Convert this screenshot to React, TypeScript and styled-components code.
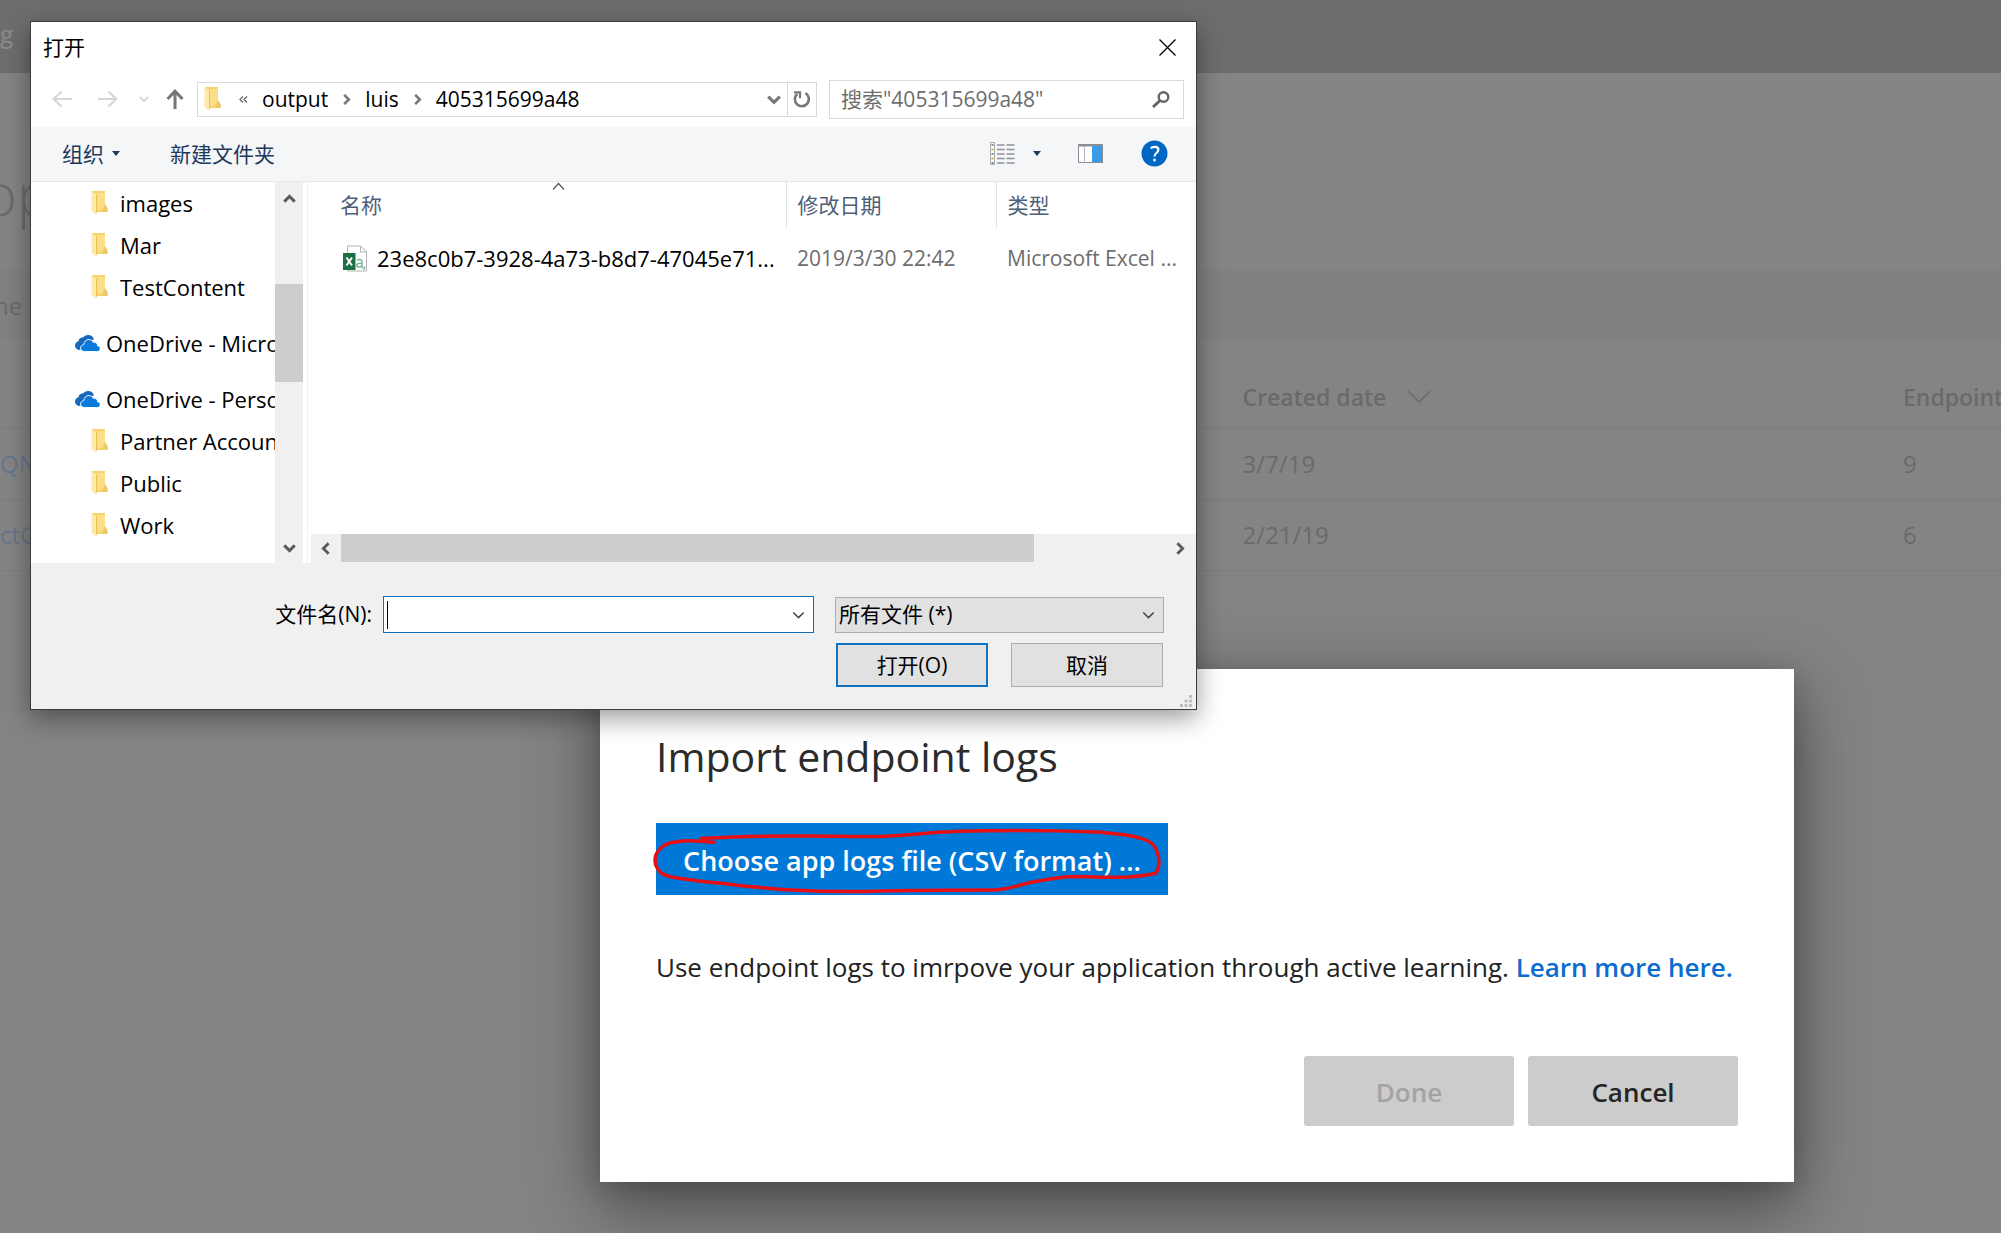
import React from "react";
import styled, { createGlobalStyle } from "styled-components";

const GlobalStyle = createGlobalStyle`
  *, *::before, *::after { box-sizing: border-box; }
  body {
    margin: 0;
    overflow: hidden;
    background: #848484;
    font-family: "Open Sans", "Noto Sans", "Noto Sans CJK SC", sans-serif;
  }
  button, input, select { font: inherit; color: inherit; }
  button { border: 0; padding: 0; background: none; }
`;

/* ---------- dimmed portal page ---------- */

const Page = styled.div`
  position: relative;
  min-height: 100vh;
  overflow: hidden;
  background: #848484;
  color: #6a6a6a;
  font-size: 24px;
`;

const TopBar = styled.header`
  display: flex;
  align-items: center;
  height: 73px;
  padding-bottom: 6px;
  background: #6d6d6d;
  color: #888;
  font-weight: 600;
`;

const PageTitle = styled.h1`
  display: flex;
  align-items: center;
  height: 197px;
  margin: 0 0 0 -17px;
  padding-top: 44px;
  font-size: 58px;
  font-weight: 300;
`;

const FilterBar = styled.div`
  display: flex;
  align-items: center;
  height: 70px;
  margin-left: -6px;
  background: #818181;
`;

const AppTable = styled.table`
  width: 100%;
  table-layout: fixed;
  border-collapse: collapse;
  text-align: left;

  th, td {
    height: 71px;
    padding: 0 0 0 2px;
    border-bottom: 1px solid #7d7d7d;
    font-weight: 400;
    white-space: nowrap;
  }
  th {
    height: 88px;
    padding-top: 26px;
    font-size: 23px;
    font-weight: 600;
  }
  td:first-child { padding-left: 0; }
  th:first-child { width: 62%; }
  th:nth-child(2) { width: 33%; }
`;

const AppLink = styled.a`
  color: #66758a;
  text-decoration: none;
`;

const SortButton = styled.button`
  display: flex;
  align-items: center;
  gap: 21px;
`;

/* ---------- import modal ---------- */

const Modal = styled.section`
  position: absolute;
  left: 600px;
  top: 669px;
  width: 1194px;
  padding: 61px 56px 56px;
  background: #fff;
  color: #222;
  box-shadow: 0 24px 64px 4px rgba(0, 0, 0, 0.42), 0 4px 20px rgba(0, 0, 0, 0.14);
`;

const ModalTitle = styled.h2`
  margin: 0 0 41px;
  font-size: 41px;
  line-height: 52px;
  font-weight: 400;
  color: #2b2b2b;
`;

const ChooseWrap = styled.div`
  position: relative;
  width: 512px;
`;

const ChooseButton = styled.button`
  width: 100%;
  height: 72px;
  padding-top: 2px;
  background: #0078d7;
  color: #fff;
  font-size: 27px;
  font-weight: 600;
  white-space: nowrap;
`;

const Scribble = styled.svg`
  position: absolute;
  left: -8px;
  top: 0;
  width: 528px;
  height: 72px;
  pointer-events: none;
`;

const Hint = styled.p`
  margin: 54px 0 0;
  font-size: 26px;
  line-height: 36px;
  white-space: nowrap;

  a { color: #0a6cce; font-weight: 600; text-decoration: none; }
`;

const ModalActions = styled.div`
  display: flex;
  justify-content: flex-end;
  gap: 14px;
  margin-top: 71px;
`;

const ModalButton = styled.button`
  width: 210px;
  height: 70px;
  padding-top: 2px;
  border-radius: 3px;
  background: #ccc;
  color: #252525;
  font-size: 26px;
  font-weight: 600;
  &:disabled { color: #a3a3a3; }
`;

/* ---------- file dialog ---------- */

const Dialog = styled.section`
  position: absolute;
  left: 30px;
  top: 21px;
  width: 1167px;
  border: 1px solid #3c3c3c;
  background: #fff;
  color: #000;
  font-size: 21px;
  line-height: 28px;
  box-shadow: 0 8px 24px rgba(0, 0, 0, 0.4);
`;

const TitleBar = styled.div`
  display: flex;
  align-items: center;
  justify-content: space-between;
  height: 50px;
  padding: 0 20px 0 12px;
`;

const IconButton = styled.button`
  display: flex;
  align-items: center;
  justify-content: center;
  flex: none;
`;

const NavRow = styled.div`
  display: flex;
  align-items: center;
  height: 55px;
  padding: 0 12px 1px 16px;
`;

const Arrows = styled.div`
  display: flex;
  align-items: center;
  gap: 17px;
  width: 150px;
`;

const HistoryButton = styled(IconButton)`
  width: 29px;
`;

const AddressBar = styled.div`
  display: flex;
  align-items: center;
  flex: 1;
  height: 35px;
  border: 1px solid #d9d9d9;
  padding-left: 6px;
`;

const Crumbs = styled.nav`
  display: flex;
  align-items: center;
  flex: 1;
  gap: 14px;
  margin-left: 18px;
`;

const Refresh = styled(IconButton)`
  width: 29px;
  height: 100%;
  margin-left: 6px;
  border-left: 1px solid #d9d9d9;
`;

const SearchBox = styled.label`
  display: flex;
  align-items: center;
  width: 355px;
  height: 39px;
  margin-left: 12px;
  padding: 0 13px 0 11px;
  border: 1px solid #d9d9d9;

  input {
    flex: 1;
    min-width: 0;
    border: 0;
    padding: 0;
    outline: 0;
    background: none;
  }
  input::placeholder { color: #6d6d6d; opacity: 1; }
`;

const Toolbar = styled.div`
  display: flex;
  align-items: center;
  height: 55px;
  padding: 0 28px 1px 31px;
  border-bottom: 1px solid #e6e7e8;
  background: #f4f6f8;
  color: #1e395b;
`;

const ToolButton = styled.button<{ $end?: number }>`
  display: flex;
  align-items: center;
  gap: 8px;
  margin-right: ${(p) => p.$end ?? 0}px;
`;

const Spacer = styled.div`
  flex: 1;
`;

const Body = styled.div`
  display: flex;
  height: 381px;
`;

const Tree = styled.div`
  flex: none;
  width: 244px;
  overflow: hidden;
  font-size: 22px;
`;

const TreeItem = styled.button<{ $root?: boolean }>`
  display: flex;
  align-items: center;
  gap: ${(p) => (p.$root ? 6 : 12)}px;
  width: 100%;
  height: 42px;
  margin-top: ${(p) => (p.$root ? 14 : 0)}px;
  padding-left: ${(p) => (p.$root ? 44 : 60)}px;
  white-space: nowrap;
  svg { flex: none; }
`;

const ScrollTrack = styled.div<{ $horizontal?: boolean }>`
  display: flex;
  flex: none;
  flex-direction: ${(p) => (p.$horizontal ? "row" : "column")};
  ${(p) => (p.$horizontal ? "height: 29px; padding-bottom: 1px;" : "width: 28px;")}
  background: #f0f0f0;
`;

const ScrollPart = styled.div<{ $grow: number; $thumb?: boolean }>`
  flex: ${(p) => p.$grow} 1 0;
  background: ${(p) => (p.$thumb ? "#cdcdcd" : "transparent")};
`;

const ScrollArrow = styled(IconButton)<{ $length: number }>`
  flex: 0 0 ${(p) => p.$length}px;
`;

const ListPane = styled.div`
  display: flex;
  flex: 1;
  flex-direction: column;
  min-width: 0;
  margin-left: 4px;
  padding-left: 3px;
  border-left: 1px solid #f0f0f0;
`;

const FileTable = styled.table`
  width: 100%;
  table-layout: fixed;
  border-collapse: collapse;
  text-align: left;

  th {
    position: relative;
    height: 46px;
    padding: 0 0 0 11px;
    color: #4c607a;
    font-weight: 400;
  }
  th + th { border-left: 1px solid #e2e2e6; }
  th:first-child { width: 475px; padding-left: 29px; }
  th:nth-child(2) { width: 210px; }
  td {
    height: 60px;
    padding: 0 0 0 11px;
    color: #6d6d6d;
    white-space: nowrap;
  }
  td:first-child { padding-left: 32px; color: #000; font-size: 22px; }
`;

const SortMark = styled.svg`
  position: absolute;
  left: 241px;
  top: 0;
`;

const FileName = styled.span`
  display: flex;
  align-items: center;
  gap: 8px;
`;

const Footer = styled.div`
  position: relative;
  padding: 33px 32px 22px 0;
  background: #f0f0f0;
`;

const FieldRow = styled.div`
  display: flex;
  justify-content: flex-end;
  align-items: center;
  gap: 21px;
`;

const NameField = styled.div`
  display: flex;
  align-items: center;
  gap: 11px;

  label { padding-bottom: 2px; }
`;

const Combo = styled.div`
  position: relative;
  display: flex;
  align-items: center;
  width: 431px;

  input {
    width: 100%;
    height: 37px;
    padding: 0 30px 0 4px;
    border: 1px solid #0f6fb8;
    border-radius: 0;
    outline: 0;
    background: #fff;
    caret-color: transparent;
  }
`;

const TextCaret = styled.span`
  position: absolute;
  left: 4px;
  width: 1px;
  height: 28px;
  background: #000;
`;

const ComboArrow = styled.span`
  position: absolute;
  right: 9px;
  display: flex;
  pointer-events: none;
`;

const TypeSelect = styled.div`
  position: relative;
  display: flex;
  align-items: center;
  width: 329px;

  select {
    appearance: none;
    width: 100%;
    height: 36px;
    padding: 0 0 2px 3px;
    border: 1px solid #adadad;
    border-radius: 0;
    background: #e1e1e1;
  }
`;

const ButtonRow = styled.div`
  display: flex;
  justify-content: flex-end;
  gap: 23px;
  margin-top: 10px;
  padding-right: 1px;
`;

const PushButton = styled.button<{ $primary?: boolean }>`
  width: 152px;
  height: 44px;
  border: ${(p) => (p.$primary ? "2px solid #0f74c4" : "1px solid #adadad")};
  background: #e1e1e1;
`;

const Grip = styled.svg`
  position: absolute;
  right: 4px;
  bottom: 2px;
`;

/* ---------- icons ---------- */

type Dir = "up" | "down" | "left" | "right";
const chevrons: Record<Dir, string> = {
  up: "M1 8 6.500 2.500 12 8",
  down: "M1 2.500 6.500 8 12 2.500",
  left: "M8 1 2.500 6.500 8 12",
  right: "M2.500 1 8 6.500 2.500 12",
};

function Chevron({ dir, color = "#5a5a5a", weight = 3, size = 13 }: { dir: Dir; color?: string; weight?: number; size?: number }) {
  const tall = dir === "left" || dir === "right";
  return (
    <svg width={tall ? Math.round(size * 0.8) : size} height={tall ? size : Math.round(size * 0.8)} viewBox={tall ? "0 0 10.500 13" : "0 0 13 10.500"} fill="none" stroke={color} strokeWidth={weight}>
      <path d={chevrons[dir]} />
    </svg>
  );
}

function NavArrow({ flip }: { flip?: boolean }) {
  return (
    <svg width="20" height="18" viewBox="0 0 20 18" fill="none" stroke="#d6d6d6" strokeWidth="2.200">
      <path d={flip ? "M0 9H18M10.500 1.500 18.300 9l-7.800 7.500" : "M20 9H2M9.500 1.500 1.700 9l7.800 7.500"} />
    </svg>
  );
}

function Folder() {
  return (
    <svg width="17" height="24" viewBox="0 0 17 24">
      <path d="M1 0h13v15l2.500 2V21H4z" fill="#f6d36f" />
      <path d="M5 2h9v13h-1.500L11 19H5z" fill="#fbdf86" />
      <path d="M14 13l2.500 4v4H11z" fill="#efc868" />
      <path d="M0.500 0.500 5 3v20.500L0.500 20z" fill="#fde9a9" />
      <path d="M5 3l1 .5V21l-1 2z" fill="#e9bf58" />
    </svg>
  );
}

function OneDrive() {
  return (
    <svg width="25" height="17" viewBox="0 0 25 17">
      <path d="M5 15C2 15 0 13 0 10.500 0 8.300 1.500 6.600 3.500 6.200 3.800 3.600 6 2.200 8 2.600 9.200 .9 11 0 13.200 0c2.900 0 5 1.700 5.700 4.200L10 9z" fill="#1568bd" />
      <path d="M9.500 16.500C7 16.500 5.600 15 5.600 13c0-1.900 1.300-3.300 3.200-3.500.2-3 2.300-5 5-5 2 0 3.600 1 4.500 2.700 2.500-.4 4.400 1.400 4.400 3.700 1.600.1 2.500 1.200 2.500 2.700 0 1.700-1.200 2.900-2.900 2.900z" fill="#0a7bdc" stroke="#fff" strokeWidth="0.900" />
    </svg>
  );
}

function ExcelCsv() {
  return (
    <svg width="26" height="27" viewBox="0 0 26 27">
      <path d="M4.500 1h13l6 6v19h-19z" fill="#fff" stroke="#b4b4b4" />
      <path d="M17.500 1v6h6" fill="none" stroke="#b4b4b4" />
      <rect x="0" y="8" width="12.500" height="17" fill="#1d7044" />
      <path d="M3.500 12.500 9 20.500M9 12.500 3.500 20.500" stroke="#fff" strokeWidth="2" />
      <path d="M14 15.500c1.500-1.400 5-1.400 5 1.200V22c0 .6.500.7 1 .5M19 18c-3 0-5.200.6-5.200 2.500 0 2.200 3.700 2 5.200 0M21.500 21.500v1.300l-1 1.700" fill="none" stroke="#7fb598" strokeWidth="1.500" />
    </svg>
  );
}

function Caret() {
  return (
    <svg width="8" height="5" viewBox="0 0 8 5"><path d="M0 0h8L4 5z" fill="#1e395b" /></svg>
  );
}

function ViewIcon() {
  const rows = [3, 7.500, 12, 16.500, 21];
  return (
    <svg width="25" height="23" viewBox="0 0 25 23" fill="none">
      <path d="M0.500 .5h4v22h-4z" stroke="#a9a9a9" fill="#fff" />
      {rows.map((y, i) => (
        <g key={y}>
          <path d={`M7 ${y}h7.500M16.500 ${y}h8`} stroke="#8f9296" strokeWidth="1.400" />
          <rect x="1.500" y={y - 1} width="2" height="2" fill={i % 2 ? "#c8a36a" : "#7b8794"} />
        </g>
      ))}
    </svg>
  );
}

function PaneIcon() {
  return (
    <svg width="25" height="19" viewBox="0 0 25 19">
      <rect x="0.500" y="0.500" width="24" height="18" fill="#fff" stroke="#8b8f94" />
      <path d="M0 1.500h25" stroke="#8b8f94" strokeWidth="2" />
      <path d="M6.500 2v16.500" stroke="#b5b9bd" />
      <rect x="14" y="2" width="10" height="16" fill="#3a9be8" />
    </svg>
  );
}

function HelpIcon() {
  return (
    <svg width="27" height="27" viewBox="0 0 27 27" fill="none">
      <circle cx="13.500" cy="13.500" r="13" fill="#0066c4" />
      <path d="M9.800 8.500C11 6.600 17.400 5.600 17.400 9.800c0 3.200-3.900 3.200-3.900 6.600" stroke="#fff" strokeWidth="2.200" />
      <rect x="12.300" y="18.700" width="2.400" height="2.600" fill="#fff" />
    </svg>
  );
}

const folders = ["images", "Mar", "TestContent"];
const personal = ["Partner Accoun", "Public", "Work"];

export default function App() {
  return (
    <Page>
      <GlobalStyle />
      <TopBar>g</TopBar>
      <PageTitle>op</PageTitle>
      <FilterBar>ne</FilterBar>
      <AppTable>
        <thead>
          <tr>
            <th aria-label="Name" />
            <th>
              <SortButton>
                Created date
                <svg width="24" height="14" viewBox="0 0 24 14" fill="none" stroke="#6a6a6a" strokeWidth="1.500"><path d="M1 1l11 11L23 1" /></svg>
              </SortButton>
            </th>
            <th>Endpoint</th>
          </tr>
        </thead>
        <tbody>
          <tr>
            <td><AppLink href="#qn">QN</AppLink></td>
            <td>3/7/19</td>
            <td>9</td>
          </tr>
          <tr>
            <td><AppLink href="#ct">ctC</AppLink></td>
            <td>2/21/19</td>
            <td>6</td>
          </tr>
        </tbody>
      </AppTable>

      <Modal aria-labelledby="import-title">
        <ModalTitle id="import-title">Import endpoint logs</ModalTitle>
        <ChooseWrap>
          <ChooseButton>Choose app logs file (CSV format) ...</ChooseButton>
          <Scribble viewBox="-8 0 528 72" fill="none" stroke="#e60f14" strokeWidth="3.500" strokeLinecap="round" strokeLinejoin="round">
            <path d="M58 19.300C48 19 38 17 27 18 16 19 10 20 6 24 0 29-1 33-1 37c0 5 2 9 6 13 6 4 14 5 24 6 18 3 34 4 50 6 20 2 38 4 57 5 38 2 60 2 90 1 36-1 80-1 110-1 16 0 26-5 41-8 16-3 26-5 39-5.500 20 0 40 1.500 57 .5 12-1 20-2 27-4 2-3 3-6 3-11 0-5-1-9-3-13-2-4-5-7-10-9-8-3-14-4-20-5-10-1-18-2-29-3-26-1-52-1.500-76-1.500-27 0-53 0-77 1.500-22 1-44 4-65 4.500-32 0-60-1-88-.5-32 0-60 1-90 2.500" />
          </Scribble>
        </ChooseWrap>
        <Hint>
          Use endpoint logs to imrpove your application through active learning. <a href="#learn">Learn more here.</a>
        </Hint>
        <ModalActions>
          <ModalButton disabled>Done</ModalButton>
          <ModalButton>Cancel</ModalButton>
        </ModalActions>
      </Modal>

      <Dialog role="dialog" aria-label="打开">
        <TitleBar>
          <span>打开</span>
          <IconButton aria-label="关闭">
            <svg width="17" height="17" viewBox="0 0 17 17" stroke="#000" strokeWidth="1.300"><path d="M.5.5l16 16M16.500.5l-16 16" /></svg>
          </IconButton>
        </TitleBar>

        <NavRow>
          <Arrows>
            <HistoryButton aria-label="后退"><NavArrow /></HistoryButton>
            <HistoryButton aria-label="前进"><NavArrow flip /></HistoryButton>
            <IconButton aria-label="历史"><Chevron dir="down" color="#d6d6d6" weight={2.500} size={10} /></IconButton>
            <IconButton aria-label="上移">
              <svg width="18" height="20" viewBox="0 0 18 20" fill="none" stroke="#777" strokeWidth="3"><path d="M9 20V3M1.500 10 9 2.200 16.500 10" /></svg>
            </IconButton>
          </Arrows>
          <AddressBar>
            <Folder />
            <Crumbs>
              <svg width="9" height="7" viewBox="0 0 9 7" fill="none" stroke="#666" strokeWidth="1.300"><path d="M4 .5l-3 3 3 3M8 .5l-3 3 3 3" /></svg>
              <button>output</button>
              <Chevron dir="right" color="#777" size={11} />
              <button>luis</button>
              <Chevron dir="right" color="#777" size={11} />
              <button>405315699a48</button>
            </Crumbs>
            <IconButton aria-label="展开"><Chevron dir="down" color="#777" size={14} /></IconButton>
            <Refresh aria-label="刷新">
              <svg width="18" height="18" viewBox="0 0 18 18" fill="none" stroke="#777" strokeWidth="2.600">
                <path d="M12.500 3.200A7 7 0 1 1 4.200 4" />
                <path d="M1 2.300h6v6" strokeWidth="2.200" />
              </svg>
            </Refresh>
          </AddressBar>
          <SearchBox>
            <input type="text" aria-label="搜索" placeholder={'搜索"405315699a48"'} />
            <svg width="18" height="17" viewBox="0 0 18 17" fill="none" stroke="#666" strokeWidth="2.400">
              <circle cx="11.500" cy="6" r="4.800" />
              <path d="M8 9.500 1 16" strokeWidth="3" />
            </svg>
          </SearchBox>
        </NavRow>

        <Toolbar>
          <ToolButton $end={50}>组织 <Caret /></ToolButton>
          <ToolButton>新建文件夹</ToolButton>
          <Spacer />
          <ToolButton aria-label="视图" $end={18}><ViewIcon /></ToolButton>
          <ToolButton aria-label="更多选项" $end={37}><Caret /></ToolButton>
          <ToolButton aria-label="预览窗格" $end={38}><PaneIcon /></ToolButton>
          <ToolButton aria-label="帮助"><HelpIcon /></ToolButton>
        </Toolbar>

        <Body>
          <Tree>
            {folders.map((name) => (
              <TreeItem key={name}><Folder />{name}</TreeItem>
            ))}
            <TreeItem $root><OneDrive />OneDrive - Microsoft</TreeItem>
            <TreeItem $root><OneDrive />OneDrive - Personal</TreeItem>
            {personal.map((name) => (
              <TreeItem key={name}><Folder />{name}</TreeItem>
            ))}
          </Tree>
          <ScrollTrack>
            <ScrollArrow $length={34} aria-label="向上滚动"><Chevron dir="up" /></ScrollArrow>
            <ScrollPart $grow={68} />
            <ScrollPart $grow={98} $thumb />
            <ScrollPart $grow={151} />
            <ScrollArrow $length={30} aria-label="向下滚动"><Chevron dir="down" /></ScrollArrow>
          </ScrollTrack>
          <ListPane>
            <FileTable>
              <thead>
                <tr>
                  <th>
                    名称
                    <SortMark width="13" height="8" viewBox="0 0 13 8" fill="none" stroke="#555" strokeWidth="1.200"><path d="M1 7.500l5.500-6 5.500 6" /></SortMark>
                  </th>
                  <th>修改日期</th>
                  <th>类型</th>
                </tr>
              </thead>
              <tbody>
                <tr>
                  <td><FileName><ExcelCsv />23e8c0b7-3928-4a73-b8d7-47045e71...</FileName></td>
                  <td>2019/3/30 22:42</td>
                  <td>Microsoft Excel ...</td>
                </tr>
              </tbody>
            </FileTable>
            <Spacer />
            <ScrollTrack $horizontal>
              <ScrollArrow $length={30} aria-label="向左滚动"><Chevron dir="left" /></ScrollArrow>
              <ScrollPart $grow={693} $thumb />
              <ScrollPart $grow={130} />
              <ScrollArrow $length={32} aria-label="向右滚动"><Chevron dir="right" /></ScrollArrow>
            </ScrollTrack>
          </ListPane>
        </Body>

        <Footer>
          <FieldRow>
            <NameField>
              <label htmlFor="file-name">文件名(N):</label>
              <Combo>
                <input id="file-name" type="text" />
                <TextCaret />
                <ComboArrow><Chevron dir="down" weight={1.500} color="#444" /></ComboArrow>
              </Combo>
            </NameField>
            <TypeSelect>
              <select aria-label="文件类型"><option>所有文件 (*)</option></select>
              <ComboArrow><Chevron dir="down" weight={1.500} color="#444" /></ComboArrow>
            </TypeSelect>
          </FieldRow>
          <ButtonRow>
            <PushButton $primary>打开(O)</PushButton>
            <PushButton>取消</PushButton>
          </ButtonRow>
          <Grip width="12" height="12" viewBox="0 0 12 12" fill="#bdbdbd">
            <path d="M9 0h3v3H9zM9 4.500h3v3H9zM9 9h3v3H9zM4.500 4.500h3v3h-3zM4.500 9h3v3h-3zM0 9h3v3H0z" />
          </Grip>
        </Footer>
      </Dialog>
    </Page>
  );
}
